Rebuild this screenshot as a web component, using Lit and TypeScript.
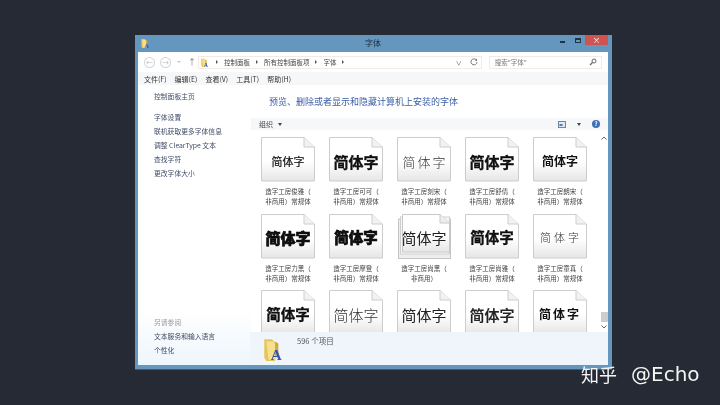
import {LitElement, html, css, svg} from 'lit';
import {customElement} from 'lit/decorators.js';

interface Font {
  look: string;
  name?: string;
  caption2?: string;
  stack?: boolean;
}

// the third row is cut by the status bar before its captions start
const FONTS: Font[] = [
  {name: '造字工房俊雅（', look: 'slim'},
  {name: '造字工房可可（', look: 'heavy'},
  {name: '造字工房刻宋（', look: 'airy'},
  {name: '造字工房舒倩（', look: 'heavy'},
  {name: '造字工房朗宋（', look: 'semi'},
  {name: '造字工房力黑（', look: 'black'},
  {name: '造字工房摩登（', look: 'black small'},
  {name: '造字工房尚黑（', look: 'plain', caption2: '非商用）', stack: true},
  {name: '造字工房尚雅（', look: 'heavy small'},
  {name: '造字工房童真（', look: 'airy tiny'},
  {look: 'heavy small'},
  {look: 'thin'},
  {look: 'plain'},
  {look: 'plain strong'},
  {look: 'semi airy-s'},
];

const folderIcon = svg`
  <path d="M3 3h7l3 3v17H5L3 20z" fill="#e6c65c" />
  <path d="M5 5h6l3 3v14H7z" fill="#f5e08c" />
  <path d="M13 5l3 2v9l-3 4z" fill="#d3a93c" />
  <text x="9" y="22" font-family="Liberation Serif" font-weight="700" font-size="14" fill="#3a55a8">A</text>
`;

const chevron = html`<svg class="chev" viewBox="0 0 4 6"><path d="M1 1l2 2-2 2z" fill="#555" /></svg>`;

@customElement('app-root')
export class AppRoot extends LitElement {
  static styles = css`
    :host {
      display: block;
      box-sizing: border-box;
      position: relative;
      width: 720px;
      height: 405px;
      padding: 35px 0 0 135px;
      overflow: hidden;
      background: #252a34;
      font-family: 'Noto Sans CJK SC', 'Noto Sans', sans-serif;
      color: #444;
    }
    .window {
      display: flex;
      flex-direction: column;
      box-sizing: border-box;
      width: 477px;
      height: 335px;
      padding: 0 4px 4px 3px;
      background: #6496be;
      border-bottom: 1px solid #3b5a76;
      filter: blur(0.35px);
    }
    .titlebar {
      display: flex;
      align-items: flex-start;
      flex: none;
      height: 17px;
    }
    .titleIcon {
      width: 11px;
      height: 12px;
      margin: 2px 0 0 2px;
    }
    .title {
      flex: 1;
      padding: 2px 0 0 40px;
      text-align: center;
      font-size: 8px;
      line-height: 11px;
      color: #1d2b38;
    }
    .winBtn {
      display: flex;
      align-items: center;
      justify-content: center;
      width: 15px;
      height: 10px;
    }
    .minLine {
      width: 5px;
      height: 2px;
      margin-top: 3px;
      background: #1f3446;
    }
    .maxBox {
      width: 6px;
      height: 5px;
      border: 1px solid #1f3446;
      border-top-width: 2px;
      box-sizing: border-box;
    }
    .close {
      width: 23px;
      background: #cf5350;
      color: #fff;
      font-size: 8px;
      line-height: 10px;
    }
    .client {
      display: flex;
      flex: 1;
      flex-direction: column;
      min-height: 0;
      background: #fff;
    }
    .nav {
      display: flex;
      align-items: center;
      flex: none;
      height: 20px;
      padding: 0 6px 0 6px;
    }
    .round {
      box-sizing: border-box;
      width: 11px;
      height: 11px;
      margin-right: 5px;
      border: 1px solid #d2d5da;
      border-radius: 50%;
      color: #b4b9c0;
      font-size: 7px;
      line-height: 8px;
      text-align: center;
    }
    .navDrop {
      width: 0;
      height: 0;
      margin: 0 7px 0 1px;
      border: 2px solid transparent;
      border-top: 2px solid #c4c4c4;
      border-bottom: 0;
    }
    .up {
      width: 8px;
      margin-right: 2px;
      color: #777;
      font-size: 8px;
      line-height: 10px;
    }
    .address {
      display: flex;
      align-items: center;
      gap: 5px;
      box-sizing: border-box;
      width: 286px;
      height: 13px;
      padding: 0 3px 0 1px;
      border: 1px solid #f3ebe3;
      font-size: 6.5px;
      color: #444;
    }
    .addrIcon {
      width: 10px;
      height: 11px;
    }
    .chev {
      width: 4px;
      height: 6px;
    }
    .spacer {
      flex: 1;
    }
    .addrDrop {
      color: #666;
      font-size: 6px;
    }
    .refresh {
      width: 8px;
      height: 8px;
      margin-left: 3px;
    }
    .search {
      display: flex;
      align-items: center;
      justify-content: space-between;
      box-sizing: border-box;
      width: 114px;
      height: 13px;
      margin-left: 7px;
      padding: 0 4px 0 5px;
      border: 1px solid #f3ebe3;
      color: #777;
      font-size: 6.5px;
    }
    .glass {
      width: 8px;
      height: 8px;
    }
    .menu {
      display: flex;
      align-items: center;
      gap: 8px;
      flex: none;
      height: 13px;
      padding-left: 6px;
      background: #f6f7f8;
      font-size: 7px;
      color: #333;
    }
    .body {
      display: flex;
      flex: 1;
      min-height: 0;
    }
    .side {
      display: flex;
      flex-direction: column;
      box-sizing: border-box;
      flex: none;
      width: 113px;
      padding: 4px 0 8px 16px;
      background: linear-gradient(#fff 80%, #eef6fd);
      font-size: 6.8px;
      line-height: 14px;
      color: #3f4c66;
    }
    .side .home {
      margin-bottom: 7px;
    }
    .side .seeAlso {
      margin-top: auto;
      color: #999;
    }
    .main {
      display: flex;
      flex: 1;
      flex-direction: column;
      min-width: 0;
    }
    .heading {
      flex: none;
      height: 33px;
      padding-left: 18px;
      color: #3b5ea6;
      font-size: 9px;
      line-height: 33px;
    }
    .tools {
      display: flex;
      align-items: center;
      flex: none;
      height: 12px;
      padding: 0 8px;
      background: #f6f7f8;
      color: #444;
      font-size: 7px;
    }
    .drop {
      margin-left: 5px;
      border: 2px solid transparent;
      border-top: 3px solid #444;
      border-bottom: 0;
    }
    .viewIcon {
      width: 8px;
      height: 7px;
      margin-right: 6px;
    }
    .help {
      width: 8px;
      height: 8px;
      margin-left: 11px;
      border-radius: 50%;
      background: #3f6fb5;
      color: #fff;
      font-size: 6px;
      font-weight: 700;
      line-height: 8px;
      text-align: center;
    }
    .content {
      display: flex;
      flex: 1;
      min-height: 0;
      overflow: hidden;
    }
    .grid {
      display: grid;
      flex: 1;
      grid-template-columns: repeat(5, 68px);
      grid-auto-rows: 76.5px;
      align-content: start;
      padding: 7px 0 0 3px;
      overflow: hidden;
    }
    .item {
      display: flex;
      flex-direction: column;
      align-items: center;
    }
    .doc {
      position: relative;
      display: flex;
      align-items: center;
      justify-content: center;
      flex: none;
      width: 54px;
      height: 45px;
      color: #111;
      white-space: nowrap;
      line-height: 1;
    }
    .doc svg {
      position: absolute;
      top: 0;
      left: 0;
      width: 54px;
      height: 45px;
    }
    .sample {
      position: relative;
      padding-top: 3px;
      font-size: 15px;
    }
    .slim {
      font-size: 11px;
      -webkit-text-stroke: 0.2px #111;
    }
    .heavy {
      font-weight: 700;
      -webkit-text-stroke: 0.3px #000;
    }
    .black {
      font-weight: 900;
      -webkit-text-stroke: 0.6px #000;
    }
    .airy {
      font-size: 13px;
      letter-spacing: 2px;
      margin-right: -2px;
      font-weight: 300;
      color: #333;
    }
    .tiny {
      font-size: 11px;
      letter-spacing: 3px;
    }
    .semi {
      font-size: 12px;
      font-weight: 700;
    }
    .airy-s {
      letter-spacing: 2px;
    }
    .small {
      font-size: 14.5px;
    }
    .thin {
      font-weight: 200;
      color: #333;
    }
    .plain {
      color: #222;
    }
    .strong {
      font-weight: 500;
      -webkit-text-stroke: 0.2px #000;
    }
    .caption {
      margin-top: 4px;
      font-size: 6.5px;
      line-height: 10px;
      text-align: center;
      color: #444;
      white-space: nowrap;
    }
    .scroll {
      display: flex;
      flex-direction: column;
      align-items: center;
      flex: none;
      width: 8px;
      padding-top: 6px;
    }
    .arrow {
      width: 6px;
      height: 4px;
    }
    .thumb {
      width: 7px;
      height: 10px;
      margin: 172px 0 3px;
      background: #cdcdcd;
    }
    .status {
      display: flex;
      flex: none;
      height: 33px;
      margin-left: -1px;
      background: #f0f5fb;
      color: #555;
      font-size: 7.5px;
    }
    .bigIcon {
      width: 26px;
      height: 28px;
      margin: 3px 10px 0 11px;
    }
    .count {
      padding-top: 2px;
      line-height: 13px;
    }
    .mark {
      position: absolute;
      left: 581px;
      top: 360px;
      display: flex;
      align-items: center;
      gap: 14px;
      color: #f4f4f4;
      font-family: 'DejaVu Sans', 'Noto Sans CJK SC', sans-serif;
      font-size: 20px;
      line-height: 29px;
      white-space: nowrap;
    }
    .markCjk {
      font-family: 'Noto Sans CJK SC', sans-serif;
      font-size: 18px;
    }
  `;

  private renderDoc(stack: boolean) {
    return html`<svg viewBox="0 0 54 45">
      <defs>
        <linearGradient id="pg" x1="0" y1="0" x2="0" y2="1">
          <stop offset="0.55" stop-color="#fff" />
          <stop offset="1" stop-color="#e6e6e6" />
        </linearGradient>
      </defs>
      ${stack
        ? svg`
            <rect x="1.5" y="5" width="52" height="39.5" fill="#eee" stroke="#c4c4c4" />
            <rect x="3.5" y="3" width="49" height="37" fill="#f7f7f7" stroke="#cfcfcf" />
            <path d="M5.5.5H43L52.5 9V38H5.5z" fill="url(#pg)" stroke="#c8c8c8" />
            <path d="M43 .5V9h9.5" fill="#eee" stroke="#c8c8c8" />`
        : svg`
            <path d="M.5.5H43L53.5 10V44H.5z" fill="url(#pg)" stroke="#cdcdcd" />
            <path d="M43 .5V10h10.5" fill="#f2f2f2" stroke="#cdcdcd" />`}
    </svg>`;
  }

  private renderItem(font: Font) {
    return html`<div class="item">
      <div class="doc">
        ${this.renderDoc(!!font.stack)}
        <span class="sample ${font.look}">简体字</span>
      </div>
      ${font.name
        ? html`<div class="caption">
            ${font.name}<br />${font.caption2 ?? '非商用）常规体'}
          </div>`
        : ''}
    </div>`;
  }

  render() {
    return html`
      <div class="window">
        <div class="titlebar">
          <svg class="titleIcon" viewBox="0 0 24 24">${folderIcon}</svg>
          <div class="title">字体</div>
          <div class="winBtn"><div class="minLine"></div></div>
          <div class="winBtn"><div class="maxBox"></div></div>
          <div class="winBtn close">×</div>
        </div>
        <div class="client">
          <div class="nav">
            <div class="round">←</div>
            <div class="round">→</div>
            <div class="navDrop"></div>
            <div class="up">↑</div>
            <div class="address">
              <svg class="addrIcon" viewBox="0 0 24 24">${folderIcon}</svg>
              ${chevron}<span>控制面板</span>${chevron}<span>所有控制面板项</span>${chevron}<span>字体</span>${chevron}
              <span class="spacer"></span>
              <span class="addrDrop">∨</span>
              <svg class="refresh" viewBox="0 0 8 8">
                <path d="M6.5 2.2A3 3 0 1 0 7 4" fill="none" stroke="#777" />
                <path d="M7 .6v2.4H4.8z" fill="#777" />
              </svg>
            </div>
            <div class="search">
              <span>搜索"字体"</span>
              <svg class="glass" viewBox="0 0 8 8">
                <circle cx="5" cy="3" r="2" fill="none" stroke="#666" />
                <path d="M3.5 4.5L1 7" stroke="#666" stroke-width="1.2" />
              </svg>
            </div>
          </div>
          <div class="menu">
            <span>文件(F)</span><span>编辑(E)</span><span>查看(V)</span><span>工具(T)</span><span>帮助(H)</span>
          </div>
          <div class="body">
            <div class="side">
              <div class="home">控制面板主页</div>
              <div>字体设置</div>
              <div>联机获取更多字体信息</div>
              <div>调整 ClearType 文本</div>
              <div>查找字符</div>
              <div>更改字体大小</div>
              <div class="seeAlso">另请参阅</div>
              <div>文本服务和输入语言</div>
              <div>个性化</div>
            </div>
            <div class="main">
              <div class="heading">预览、删除或者显示和隐藏计算机上安装的字体</div>
              <div class="tools">
                <span>组织</span>
                <div class="drop"></div>
                <span class="spacer"></span>
                <svg class="viewIcon" viewBox="0 0 8 7">
                  <rect x=".5" y=".5" width="7" height="6" fill="#dfe8f2" stroke="#6c86a3" />
                  <rect x="1.5" y="3" width="3" height="2" fill="#4f7fb0" />
                </svg>
                <div class="drop"></div>
                <div class="help">?</div>
              </div>
              <div class="content">
                <div class="grid">${FONTS.map((f) => this.renderItem(f))}</div>
                <div class="scroll">
                  <svg class="arrow" viewBox="0 0 6 4"><path d="M.5 3.5L3 1l2.5 2.5" fill="none" stroke="#666" /></svg>
                  <div class="thumb"></div>
                  <svg class="arrow" viewBox="0 0 6 4"><path d="M.5.5L3 3 5.5.5" fill="none" stroke="#666" /></svg>
                </div>
              </div>
              <div class="status">
                <svg class="bigIcon" viewBox="0 0 24 24">${folderIcon}</svg>
                <div class="count">596 个项目</div>
              </div>
            </div>
          </div>
        </div>
      </div>
      <div class="mark"><span class="markCjk">知乎</span><span>@Echo</span></div>
    `;
  }
}
